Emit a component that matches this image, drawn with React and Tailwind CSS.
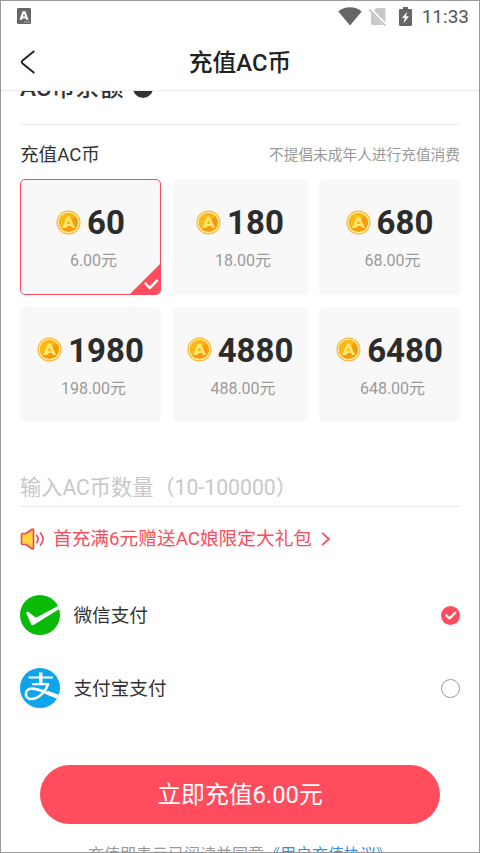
import React from "react";

const packs = [
  { coins: "60", price: "6.00元", selected: true },
  { coins: "180", price: "18.00元" },
  { coins: "680", price: "68.00元" },
  { coins: "1980", price: "198.00元" },
  { coins: "4880", price: "488.00元" },
  { coins: "6480", price: "648.00元" },
];

function Coin() {
  return (
    <svg className="-mt-px size-[25px] shrink-0" viewBox="0 0 25 25" fill="none">
      <circle cx="12.5" cy="12.5" r="12" fill="#fdb62b" />
      <circle cx="12.5" cy="12.5" r="10.8" fill="#fff0b0" />
      <circle cx="12.5" cy="12.5" r="9.6" fill="#f99a0c" />
      <path d="M5.7 19.3A9.6 9.6 0 0 1 19.3 5.7Z" fill="#fdb713" />
      <path d="M11 6.500H13.800L19.200 18H16L15.100 16H12L10.100 18H5.900ZM12.400 10.200 10.900 13.700H14Z" fill="#ffe66d" fillRule="evenodd" />
    </svg>
  );
}

function StatusBar() {
  return (
    <div className="flex h-[31px] shrink-0 items-center pr-[10px] pl-4">
      <svg className="-mt-px h-4 w-[14px]" viewBox="0 0 14 16">
        <rect width="14" height="16" rx="1" fill="#666" />
        <path d="M3.500 11.800 6.300 4.300h1.400l2.800 7.500M4.800 9.500h4.400" stroke="#fff" strokeWidth="2" fill="none" />
        <path d="M7 14h6" stroke="#ccc" strokeDasharray="1.4 .6" />
      </svg>
      <svg className="-mt-px ml-auto h-[19px] w-6" viewBox="0 0 24 19">
        <path d="M.3 4.400C7-1 17-1 23.700 4.400L12 18.600Z" fill="#666" />
      </svg>
      <svg className="-mt-px ml-[7px] h-[19px] w-[18px]" viewBox="0 0 18 19">
        <path d="M7.500 1H15q1.500 0 1.500 1.500V18H3.500q-1.500 0-1.500-1.500V6Z" fill="#c8c8c8" />
        <path d="M0 1 17.500 19" stroke="#fff" strokeWidth="3.600" />
        <path d="M0 2.300 16.500 18.700" stroke="#bbb" strokeWidth="1.500" />
      </svg>
      <svg className="-mt-px ml-[12px] h-[19px] w-[13px]" viewBox="0 0 13 20" preserveAspectRatio="none">
        <path d="M4 0h5v2h2.500Q13 2 13 3.300V18.700Q13 20 11.700 20H1.300Q0 20 0 18.700V3.300Q0 2 1.300 2H4Z" fill="#666" />
        <path d="M8.200 5 3 11.700h2.800L4.600 17 10 9.700H7Z" fill="#fff" />
      </svg>
      <span className="ml-[10px] text-[19px] leading-none text-[#555]">11:33</span>
    </div>
  );
}

function Pack({ coins, price, selected }) {
  return (
    <button
      className={
        selected
          ? "relative flex flex-col items-center justify-start overflow-hidden rounded-[5px] border border-[#f94d60] bg-[#f8f8f8] pt-[22px]"
          : "relative flex flex-col items-center justify-start overflow-hidden rounded-[5px] border border-[#f8f8f8] bg-[#f8f8f8] pt-[22px]"
      }
    >
      <span className="flex items-center gap-1.5">
        <Coin />
        <span className="pt-px text-[33px] leading-10 font-bold text-[#2c2c2c]">{coins}</span>
      </span>
      <span className="mt-[6px] pl-[6px] text-base leading-6 text-[#9a9a9a]">{price}</span>
      {selected && (
        <svg className="absolute right-0 bottom-0 h-[30px] w-[30px]" viewBox="0 0 30 30">
          <path d="M30 0V30H0Z" fill="#ff4d5e" />
          <path d="m15.500 19.500 4.300 4.500 7.200-7.300" fill="none" stroke="#fff" strokeWidth="2.500" strokeLinecap="round" strokeLinejoin="round" />
        </svg>
      )}
    </button>
  );
}

export default function App() {
  return (
    <div className="flex h-[853px] w-[480px] flex-col overflow-hidden border border-[#999] bg-white font-[Roboto,'Noto_Sans_CJK_SC',sans-serif] text-[#333]">
      <StatusBar />
      <header className="grid h-[59px] shrink-0 grid-cols-[80px_1fr_80px] items-center border-b border-[#ececec]">
        <svg className="mt-px ml-[19px] h-6 w-4" viewBox="0 0 16 24" fill="none" stroke="#222" strokeWidth="1.900">
          <path d="M14.300 1 2.300 10.800Q1.200 12 2.300 13.200L14.300 23" />
        </svg>
        <h1 className="pt-[3px] text-center text-[23.800px] leading-8 font-medium text-[#222]">充值AC币</h1>
      </header>

      <main className="flex min-h-0 flex-1 flex-col overflow-hidden px-[19px]">
        <div className="h-[34px] shrink-0 overflow-hidden border-b border-[#ececec]">
          <div className="-mt-[19px] flex items-center gap-[10px]">
            <h2 className="text-2xl leading-8 font-medium">AC币余额</h2>
            <svg className="-mt-[1px] size-5" viewBox="0 0 20 20">
              <circle cx="10" cy="10" r="10" fill="#333" />
              <path d="M10 5v7.500" stroke="#fff" strokeWidth="2.500" />
            </svg>
          </div>
        </div>

        <div className="flex h-[54px] shrink-0 items-center justify-between pt-[7px]">
          <h3 className="pt-px text-[18.600px]">充值AC币</h3>
          <span className="text-[14.700px] text-[#9a9a9a]">不提倡未成年人进行充值消费</span>
        </div>

        <div className="grid shrink-0 auto-rows-[115.500px] grid-cols-[141px_135px_141px] justify-between gap-y-3">
          {packs.map((p) => (
            <Pack key={p.coins} {...p} />
          ))}
        </div>

        <div className="mt-[45px] flex h-[40px] shrink-0 items-center border-b border-[#ececec] pt-[2px] text-[21.200px] text-[#c8c8c8]">
          输入AC币数量（10-100000）
        </div>

        <div className="flex h-[63px] shrink-0 items-center text-[#f94d60]">
          <svg className="h-[22px] w-[26px]" viewBox="0 0 26 22" fill="none" stroke="#f0485a" strokeWidth="1.700" strokeLinecap="round" strokeLinejoin="round">
            <path d="M1.500 6.500Q1.500 5.500 2.500 5.500H6L12 1.300Q13.500.5 13.500 2.300V19.700Q13.500 21.500 12 20.700L6 16.500H2.500Q1.500 16.500 1.500 15.500Z" fill="#ffd53f" />
            <path d="M16.700 7.500Q19.500 11 16.700 14.500M20.500 5Q25.500 11 20.500 17" />
          </svg>
          <span className="ml-[7px] pt-[2px] text-[18.700px]">首充满6元赠送AC娘限定大礼包</span>
          <svg className="ml-[9px] h-[14px] w-[9px]" viewBox="0 0 8 12" fill="none" stroke="currentColor" strokeWidth="1.600">
            <path d="m1 .6 6 5.400-6 5.400" />
          </svg>
        </div>

        <div className="mt-[8px] flex h-[73px] shrink-0 items-center">
          <svg className="size-10" viewBox="0 0 40 40">
            <circle cx="20" cy="20" r="20" fill="#09bb07" />
            <path d="M6 17.500Q7.500 15.800 10 18.200L15 22Q16 22.600 17.300 22L38 11 39.200 14 14 29.800Q12 31 11 29Z" fill="#fff" />
          </svg>
          <span className="ml-[13.500px] flex-1 pt-[4px] text-[18.600px]">微信支付</span>
          <svg className="mt-px size-[19px]" viewBox="0 0 19 19">
            <circle cx="9.500" cy="9.500" r="9.500" fill="#ff4d5e" />
            <path d="m5.500 9.500 3 3 5.700-5.700" fill="none" stroke="#fff" strokeWidth="2.300" strokeLinecap="round" strokeLinejoin="round" />
          </svg>
        </div>

        <div className="flex h-[73px] shrink-0 items-center">
          <svg className="size-10" viewBox="0 0 40 40">
            <circle cx="20" cy="20" r="20" fill="#0fa5ed" />
            <g fill="none" stroke="#fff">
              <path d="M8.500 9.500H33M12 16.200H29" strokeWidth="2.200" />
              <path d="M20.700 4.500V16" strokeWidth="3.500" />
              <path d="M28.500 15.700C26 23 19 30.500 12 31C4.500 31.500 3.800 22 10.500 20.700C18 19.500 26 25.500 39 29.500" strokeWidth="2.600" />
              <path d="M27 24.500 39.500 29.300" strokeWidth="4" />
            </g>
          </svg>
          <span className="ml-[13.500px] flex-1 pt-[4px] text-[18.600px]">支付宝支付</span>
          <span className="mt-px size-[19px] rounded-full border border-[#999]" />
        </div>

        <button className="mx-5 mt-[41px] h-[59px] shrink-0 rounded-full bg-[#ff4d5e] pt-[2px] text-[23.800px] text-white">
          立即充值6.00元
        </button>
        <p className="mt-[19px] shrink-0 text-center text-base leading-6 whitespace-nowrap text-[#999]">
          充值即表示已阅读并同意<span className="text-[#2f8fe8]">《用户充值协议》</span>
        </p>
      </main>
    </div>
  );
}
